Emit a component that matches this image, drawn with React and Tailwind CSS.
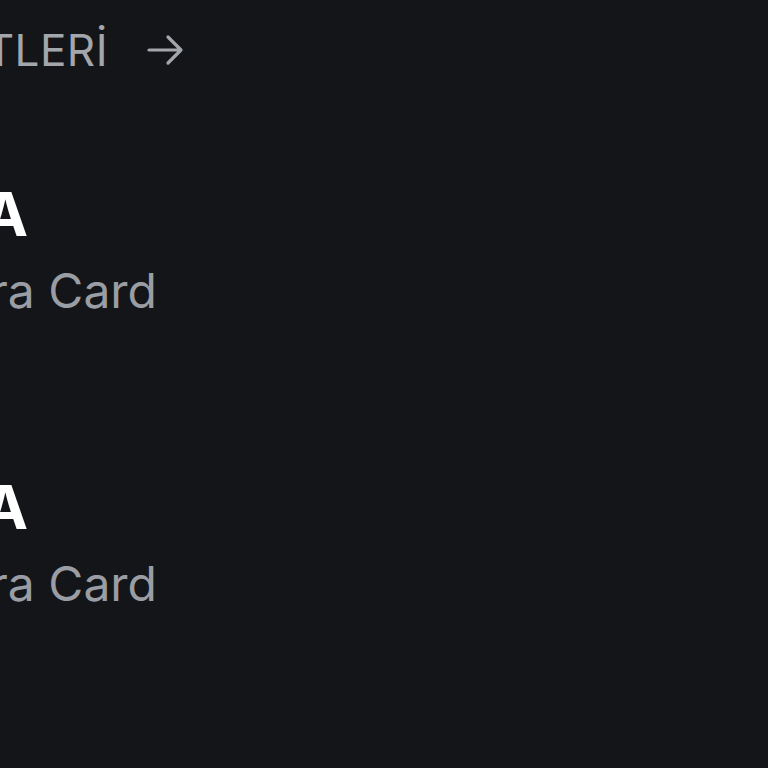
import React from 'react';

const Card = ({ brand, name }) => (
  <div className="flex flex-col">
    <div className="flex w-[28px] justify-end">
      <h3 className="whitespace-nowrap text-[60px] font-bold leading-[60px] text-white">{brand}</h3>
    </div>
    <div className="mt-[23px] flex w-[157px] justify-end">
      <p className="whitespace-nowrap text-[48px] leading-[48px] text-[#9a9da3]">{name}</p>
    </div>
  </div>
);

export default function App() {
  return (
    <div className="h-[768px] w-[768px] overflow-hidden bg-[#131519] font-['Inter',sans-serif]">
      <div className="flex items-center pt-[26px]">
        <div className="flex w-[108px] justify-end">
          <span className="whitespace-nowrap text-[44px] leading-[44px] tracking-[0.5px] text-[#a3a6ab]">TÜM HİZMETLERİ</span>
        </div>
        <svg className="ml-[34px]" width="48" height="48" viewBox="0 0 24 24" fill="none" stroke="#a3a6ab" strokeWidth="1.6" strokeLinecap="round" strokeLinejoin="round">
          <path d="M3.5 12h16M13 5.5l6.5 6.5-6.5 6.5" />
        </svg>
      </div>
      <div className="mt-[110px] flex flex-col gap-[162px]">
        <Card brand="VISA" name="Visa Extra Card" />
        <Card brand="VISA" name="Visa Extra Card" />
      </div>
    </div>
  );
}
